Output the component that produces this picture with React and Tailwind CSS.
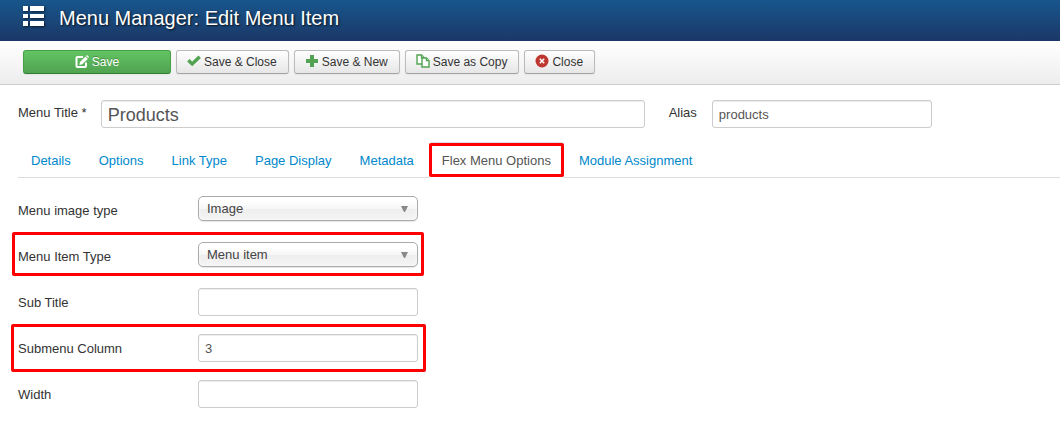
import React, { useState } from 'react';

const ListIcon = () => (
  <svg viewBox="0 0 21 20" className="w-[21px] h-5 drop-shadow-[1px_1px_1px_rgba(0,0,0,0.6)]" fill="#fff" aria-hidden="true">
    <path d="M0 0h5v5H0zM7 0h14v5H7zM0 8h5v4H0zM7 8h14v4H7zM0 15h5v5H0zM7 15h14v5H7z" />
  </svg>
);

const EditIcon = () => (
  <svg viewBox="0 0 14 14" className="w-3.5 h-3.5" aria-hidden="true">
    <path d="M8 2H2.500Q1.500 2 1.500 3v8q0 1 1 1H10q1 0 1-1V7.500" fill="none" stroke="#fff" strokeWidth="2" />
    <path d="M4.300 9.900 5 6.900 10.400 1.500l2.400 2.400L7.400 9.300z" fill="#fff" />
    <path d="M11 .9 11.900 0 14 2.100l-.9.9z" fill="#fff" />
  </svg>
);

const CheckIcon = () => (
  <svg viewBox="0 0 14 14" className="w-3.5 h-3.5 -translate-y-px" aria-hidden="true">
    <path d="M1.300 6.300 5.200 10 12.700 2.800" fill="none" stroke="#51a351" strokeWidth="3.400" />
  </svg>
);

const PlusIcon = () => (
  <svg viewBox="0 0 14 14" className="w-3.5 h-3.5 -translate-y-px" aria-hidden="true">
    <path d="M5 1h4v4h4v4H9v4H5V9H1V5h4z" fill="#51a351" />
  </svg>
);

const CopyIcon = () => (
  <svg viewBox="0 0 14 14" className="w-3.5 h-3.5 -translate-y-px" fill="#fff" stroke="#51a351" strokeWidth="1.400" aria-hidden="true">
    <path d="M1 1h4.500L8 3.500V10H1z" />
    <path d="M5.500 1v2.500H8" />
    <path d="M6 4h4.500L13 6.500V13H6z" />
    <path d="M10.500 4v2.500H13" />
  </svg>
);

const CancelIcon = () => (
  <svg viewBox="0 0 14 14" className="w-3.5 h-3.5 -translate-y-px" aria-hidden="true">
    <circle cx="7" cy="7" r="6.500" fill="#bd362f" />
    <path d="m4.800 4.800 4.400 4.400m0-4.400L4.800 9.200" stroke="#fff" strokeWidth="1.500" />
  </svg>
);

const toolbar = [
  { label: 'Save & Close', icon: CheckIcon },
  { label: 'Save & New', icon: PlusIcon },
  { label: 'Save as Copy', icon: CopyIcon },
  { label: 'Close', icon: CancelIcon },
];

const tabs = ['Details', 'Options', 'Link Type', 'Page Display', 'Metadata', 'Flex Menu Options', 'Module Assignment'];

const inputClass =
  'h-7 bg-white border border-[#ccc] rounded-[3px] px-1.5 text-[#555] shadow-[inset_0_1px_1px_rgba(0,0,0,0.075)] focus:outline-none focus:border-[#52a8ec]';

const Highlight = ({ className }) => (
  <span className={`absolute border-3 border-[#f00] rounded-xs pointer-events-none ${className}`} />
);

const Field = ({ id, label, highlight, children }) => (
  <div className="relative flex items-start h-7">
    <label htmlFor={id} className="w-[180px] shrink-0 leading-[30px]">{label}</label>
    {children}
    {highlight && <Highlight className={highlight} />}
  </div>
);

const SelectBox = ({ id, options }) => (
  <div className="relative w-[220px]">
    <select
      id={id}
      className="block w-full h-[25px] appearance-none border border-[#aaa] rounded-[5px] pl-2 pr-6 pt-px text-[#444] bg-[linear-gradient(#fff_20%,#f6f6f6_50%,#eee_52%,#f4f4f4_100%)] shadow-[inset_0_0_3px_#fff,0_1px_1px_rgba(0,0,0,0.1)]"
    >
      {options.map((option) => (
        <option key={option}>{option}</option>
      ))}
    </select>
    <svg viewBox="0 0 7 6" className="absolute right-2.5 top-2.5 w-[7px] h-1.5 pointer-events-none" aria-hidden="true">
      <path d="M0 0h7L4 6H3z" fill="#888" />
    </svg>
  </div>
);

const App = () => {
  const [activeTab, setActiveTab] = useState('Flex Menu Options');

  return (
    <div className="font-['Liberation_Sans',Arial,sans-serif] text-[13px] leading-[18px] text-[#333] bg-white">
      <header className="flex items-start h-[41px] pl-[23px] pt-1.5 gap-[15px] bg-linear-to-b from-[#17568c] to-[#1a3867]">
        <ListIcon />
        <h1 className="text-xl leading-6 text-white [text-shadow:1px_1px_2px_rgba(0,0,0,0.8)]">Menu Manager: Edit Menu Item</h1>
      </header>

      {/* Toolbar */}
      <div className="flex flex-wrap gap-[5px] pl-[23px] pt-[9px] pb-2.5 border-b border-[#ccc] bg-linear-to-b from-white to-[#ededed] text-xs">
        <button
          type="button"
          className="flex items-center justify-center gap-[3px] w-[148px] h-6 rounded-[3px] border border-[#46a046] border-b-[#2f7d2f] bg-linear-to-b from-[#62c462] to-[#51a351] text-white [text-shadow:0_-1px_0_rgba(0,0,0,0.25)] shadow-[0_1px_2px_rgba(0,0,0,0.05)]"
        >
          <EditIcon />
          Save
        </button>
        {toolbar.map(({ label, icon: Icon }) => (
          <button
            key={label}
            type="button"
            className="flex items-center gap-[3px] h-6 pl-2.5 pr-[11px] rounded-[3px] border border-[#bbb] border-b-[#a2a2a2] bg-linear-to-b from-white to-[#e6e6e6] shadow-[0_1px_2px_rgba(0,0,0,0.05)]"
          >
            <Icon />
            {label}
          </button>
        ))}
      </div>

      <main className="pl-[18px] pt-[15px] pb-6">
        <div className="flex items-start">
          <label htmlFor="title" className="shrink-0 mr-3.5 leading-[26px]">Menu Title *</label>
          <input id="title" defaultValue="Products" className={`${inputClass} flex-1 min-w-0 max-w-[544px] text-lg pt-0.5`} />
          <label htmlFor="alias" className="shrink-0 ml-6 mr-[15px] leading-[26px]">Alias</label>
          <input id="alias" defaultValue="products" className={`${inputClass} w-[220px]`} />
        </div>

        <nav className="flex gap-0.5 mt-3.5 mb-[18px] border-b border-[#ddd]">
          {tabs.map((tab) => (
            <a
              key={tab}
              href="#"
              onClick={(e) => {
                e.preventDefault();
                setActiveTab(tab);
              }}
              className={`relative -mb-px px-3 pt-[9px] pb-[7px] border rounded-t-sm whitespace-nowrap ${
                tab === activeTab ? 'bg-white border-[#ddd] border-b-transparent text-[#555]' : 'border-transparent text-[#08c]'
              }`}
            >
              {tab}
              {tab === 'Flex Menu Options' && <Highlight className="-left-px -right-px top-0 bottom-0" />}
            </a>
          ))}
        </nav>

        <form className="flex flex-col gap-[18px]">
          <Field id="imageType" label="Menu image type">
            <SelectBox id="imageType" options={['Image', 'Icon']} />
          </Field>
          <Field id="itemType" label="Menu Item Type" highlight="-left-1.5 w-[412px] -top-2.5 h-11">
            <SelectBox id="itemType" options={['Menu item', 'Module']} />
          </Field>
          <Field id="subTitle" label="Sub Title">
            <input id="subTitle" className={`${inputClass} w-[220px]`} />
          </Field>
          <Field id="columns" label="Submenu Column" highlight="-left-[7px] w-[415px] -top-2.5 h-12">
            <input id="columns" defaultValue="3" className={`${inputClass} w-[220px]`} />
          </Field>
          <Field id="width" label="Width">
            <input id="width" className={`${inputClass} w-[220px]`} />
          </Field>
        </form>
      </main>
    </div>
  );
};

export default App;
